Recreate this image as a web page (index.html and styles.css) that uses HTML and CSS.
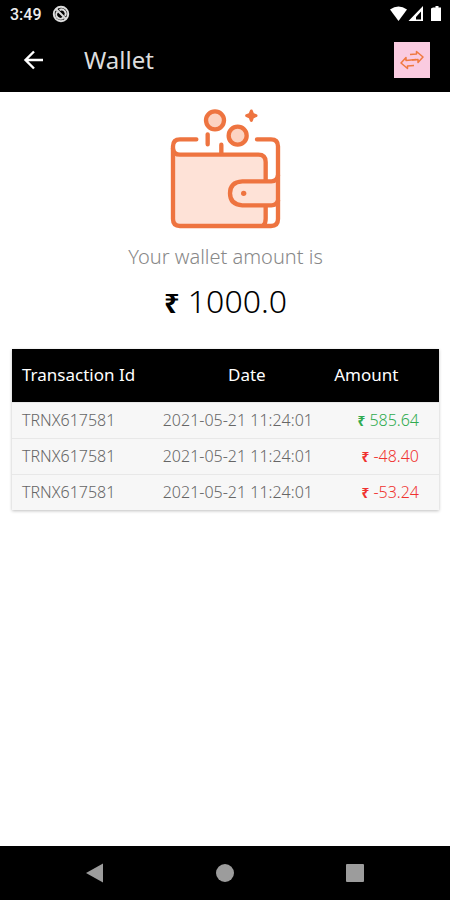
FILE: index.html
```
<!DOCTYPE html>
<html lang="en">
<head>
<meta charset="utf-8" />
<meta name="viewport" content="width=device-width, initial-scale=1" />
<title>Wallet</title>
<link rel="stylesheet" href="styles.css">
</head>
<body>
<header class="top">
  <div class="statusBar">
    <span class="clock">3:49</span>
    <svg class="noSync" width="18" height="18" viewBox="0 0 18 18" fill="none" stroke="#ddd" stroke-width="2">
      <circle cx="9" cy="9" r="7.2"/>
      <path d="M5.500 6.500a4.200 4.200 0 0 0 6 6M7.500 5a4.200 4.200 0 0 1 5.500 6"/>
      <path d="M4 4l10 10"/>
    </svg>
    <svg class="signals" width="52" height="16" viewBox="0 0 52 16" fill="#fff">
      <path d="M0 3.500Q8.500-2.500 17 3.500L8.500 15z"/>
      <path d="M33 0v15H18.500zM31 5.500l-5 5.500v2.500h5z" fill-rule="evenodd"/>
      <path d="M43 1.500h2.500V0h3v1.500H51V15H41V2.500z"/>
    </svg>
  </div>
  <div class="appBar">
    <button class="iconBtn" type="button" aria-label="Back">
      <svg width="20" height="20" viewBox="0 0 20 20" fill="none" stroke="#fff" stroke-width="2.400">
        <path d="M20 10H2.500M11 1.500L2.500 10l8.500 8.500"/>
      </svg>
    </button>
    <h1 class="title">Wallet</h1>
    <button class="swapBtn" type="button" aria-label="Transfer">
      <svg width="24" height="20" viewBox="0 0 24 20" fill="none" stroke="#f0793f" stroke-width="1.500" stroke-linejoin="round">
        <path d="M10 4.500l6.500-.5V1.500L23 7l-5 5.500v-3l-6 .500"/>
        <path d="M14 15.500l-6.500.500v2.500L1 13l5-5.500v3l10-1"/>
      </svg>
    </button>
  </div>
</header>

<main class="content">
  <section class="balance">
    <svg class="walletArt" width="112" height="122" viewBox="60 38 336 366" fill="none" stroke="#ee7440" stroke-width="13" stroke-linecap="round" stroke-linejoin="round">
      <path d="M69 178H325Q347 178 347 200V372Q347 392 327 392H90Q69 392 69 371z" fill="#fee2d7" stroke="none"/>
      <path d="M69 160Q71 178 90 178H325Q347 178 347 200V256M347 332V370Q347 384 340 390"/>
      <path d="M384 240Q382 258 364 258H277Q240 260 240 294T277 330H364Q380 330 384 316" fill="#fee2d7"/>
      <path d="M139 132H90Q69 132 69 153V371Q69 392 90 392H363Q384 392 384 371V153Q384 132 363 132H321"/>
      <path d="M173 117V147M214 148V174"/>
      <circle cx="195" cy="75" r="27" fill="#fcd3c2"/>
      <circle cx="263" cy="121" r="27" fill="#fcd3c2"/>
      <circle cx="281" cy="294" r="8" fill="#ee7440" stroke="none"/>
      <path d="M304 47L308 57L318 61L308 65L304 75L300 65L290 61L300 57z" fill="#ee7440" stroke-width="9"/>
    </svg>
    <p class="caption">Your wallet amount is</p>
    <p class="amount"><span class="rupee">₹</span> 1000.0</p>
  </section>

  <table class="transactions">
    <thead>
      <tr><th class="colId">Transaction Id</th><th class="colDate">Date</th><th class="colAmount">Amount</th></tr>
    </thead>
    <tbody>
      <tr><td>TRNX617581</td><td class="date">2021-05-21 11:24:01</td><td class="money credit"><span class="rupee">₹</span> 585.64</td></tr>
      <tr><td>TRNX617581</td><td class="date">2021-05-21 11:24:01</td><td class="money debit"><span class="rupee">₹</span> -48.40</td></tr>
      <tr><td>TRNX617581</td><td class="date">2021-05-21 11:24:01</td><td class="money debit"><span class="rupee">₹</span> -53.24</td></tr>
    </tbody>
  </table>
</main>

<nav class="navBar">
  <button class="iconBtn" type="button" aria-label="Back">
    <svg width="20" height="20" viewBox="0 0 20 20" fill="#9c9c9c"><path d="M18 .500v19L1 10z"/></svg>
  </button>
  <button class="iconBtn" type="button" aria-label="Home">
    <svg width="20" height="20" viewBox="0 0 20 20" fill="#9c9c9c"><circle cx="10" cy="10" r="9"/></svg>
  </button>
  <button class="iconBtn" type="button" aria-label="Recent apps">
    <svg width="20" height="20" viewBox="0 0 20 20" fill="#9c9c9c"><rect x="1" y="1" width="18" height="18" rx="1"/></svg>
  </button>
</nav>
</body>
</html>
```
FILE: styles.css
```
* {
  box-sizing:border-box;
}
body {
  margin:0; min-height:100vh; background:#fff; color:#000;
  font-family:"Noto Sans", sans-serif;
  display:flex; flex-direction:column;
}
button {
  border:none; padding:0; cursor:pointer;
}
svg {
  display:block;
}
.top {
  background:#000; color:#fff;
}
.statusBar {
  display:flex; align-items:center; height:28px; padding:0 8px 0 10px;
}
.clock {
  font-family:Roboto, sans-serif; font-size:16px; font-weight:500; color:#eee;
}
.noSync {
  margin-left:10px;
}
.signals {
  margin-left:auto;
}
.appBar {
  display:flex; align-items:center; height:64px; padding:0 20px 0 23px;
}
.iconBtn {
  background:none;
}
.title {
  margin:0 0 0 41px; font-size:24px; line-height:32px; font-weight:400; color:#ddd;
}
.swapBtn {
  margin-left:auto; width:36px; height:36px; background:#facbe0;
  display:flex; align-items:center; justify-content:center;
}
.content {
  flex:1; padding:16px 11px 16px 12px;
}
.balance {
  display:flex; flex-direction:column; align-items:center;
}
.caption {
  margin:11px 0 0; font-size:20px; line-height:32px; font-weight:300; color:#888;
}
.amount {
  margin:8px 0 0; font-size:32px; line-height:40px; font-weight:300;
}
.rupee {
  font-size:85%; line-height:1; font-weight:700;
}
.transactions {
  width:100%; margin-top:28px; table-layout:fixed; border-collapse:collapse;
  background:#f7f7f7; box-shadow:0 1px 3px rgba(0,0,0,.25);
}
.transactions th {
  height:53px; padding:0; background:#000; color:#fff;
  font-size:17px; line-height:24px; font-weight:400;
}
.transactions td {
  height:36px; padding:0; font-size:16px; line-height:24px; font-weight:300; color:#666;
  border-top:1px solid #e8e8e8; white-space:nowrap;
}
.transactions th:first-child, .transactions td:first-child {
  padding-left:10px; text-align:left;
}
.colId {
  width:35%;
}
.colDate {
  width:40%;
}
.transactions .colAmount {
  padding-left:2px; text-align:left;
}
.transactions .date {
  padding-right:18px; text-align:center;
}
.transactions .money {
  padding-right:20px; text-align:right;
}
.transactions .credit {
  color:#2fab4f;
}
.transactions .debit {
  color:#f0322f;
}
.navBar {
  display:flex; justify-content:space-between; align-items:center;
  height:54px; padding:0 85px; background:#000;
}
```
